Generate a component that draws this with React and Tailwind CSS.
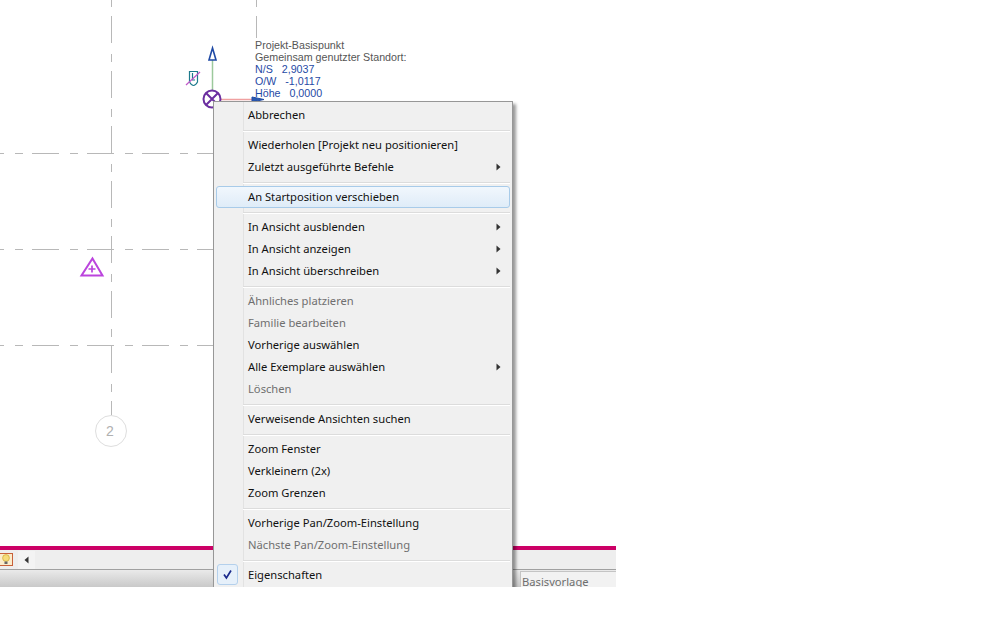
const F = "font-['Noto_Sans','Open_Sans',sans-serif]";

const groups = [
  [["Abbrechen"]],
  [["Wiederholen [Projekt neu positionieren]"], ["Zuletzt ausgeführte Befehle", "sub"]],
  [["An Startposition verschieben", "hot"]],
  [["In Ansicht ausblenden", "sub"], ["In Ansicht anzeigen", "sub"], ["In Ansicht überschreiben", "sub"]],
  [["Ähnliches platzieren", "off"], ["Familie bearbeiten", "off"], ["Vorherige auswählen"], ["Alle Exemplare auswählen", "sub"], ["Löschen", "off"]],
  [["Verweisende Ansichten suchen"]],
  [["Zoom Fenster"], ["Verkleinern (2x)"], ["Zoom Grenzen"]],
  [["Vorherige Pan/Zoom-Einstellung"], ["Nächste Pan/Zoom-Einstellung", "off"]],
  [["Eigenschaften", "check"]],
];

function Row({ label, kind }) {
  return (
    <div className={`relative h-[22px] flex items-center pl-[34px] pr-[11px] text-[11.2px] leading-none ${kind === "off" ? "text-[#6f6f6f]" : "text-[#111111]"}`}>
      {kind === "hot" && (
        <div className="absolute left-[2px] right-[2px] inset-y-0 rounded-[3px] border border-[#a8cbe9] bg-gradient-to-b from-[#f1f7fd] to-[#dfecf8]" />
      )}
      {kind === "check" && (
        <div className="absolute left-[3px] top-0 w-[21px] h-[21px] rounded-[3px] border border-[#b4d0ec] bg-[#e6f0fa] flex items-center justify-center">
          <svg width="11" height="11" viewBox="0 0 11 11"><path d="M2 5.5 L4.4 9 L9 1.5" fill="none" stroke="#1a2a8c" strokeWidth="1.7" /></svg>
        </div>
      )}
      <span className="relative flex-1 whitespace-nowrap">{label}</span>
      {kind === "sub" && (
        <svg className="relative" width="5" height="8" viewBox="0 0 5 8"><path d="M0.5 0.5 L4.5 4 L0.5 7.5 Z" fill="#333" /></svg>
      )}
    </div>
  );
}

function Separator() {
  return (
    <div className="h-[8px] ml-[29px] mr-[2px] pt-[4px]">
      <div className="h-px bg-[#dcdcdc]" />
      <div className="h-px bg-white" />
    </div>
  );
}

function ContextMenu() {
  return (
    <div className={`absolute left-[213px] top-[101px] w-[300px] border border-[#979797] bg-[#f0f0f0] pt-[2px] pb-[3px] shadow-[3px_3px_3px_rgba(0,0,0,0.4)] ${F}`}>
      <div className="absolute left-[29px] inset-y-0 w-px bg-[#e2e2e2]" />
      <div className="relative flex flex-col">
        {groups.map((g, i) => (
          <div key={i}>
            {i > 0 && <Separator />}
            {g.map(([label, kind]) => <Row key={label} label={label} kind={kind} />)}
          </div>
        ))}
      </div>
    </div>
  );
}

function Drawing() {
  const dash = "27 11 8 9";
  return (
    <svg className="absolute inset-0" width="616" height="546" viewBox="0 0 616 546">
      <g stroke="#b8b8b8" strokeWidth="1" fill="none">
        <path d="M111.5 0 V415" strokeDasharray={dash} strokeDashoffset="39" />
        <path d="M256.5 0 V38" strokeDasharray={dash} strokeDashoffset="39" />
        <path d="M0 153.5 H214" strokeDasharray={dash} strokeDashoffset="23" />
        <path d="M0 249.5 H214" strokeDasharray={dash} strokeDashoffset="23" />
        <path d="M0 345.5 H214" strokeDasharray={dash} strokeDashoffset="23" />
      </g>
      <circle cx="111" cy="431" r="15.5" fill="white" stroke="#dedede" />
      <path d="M92.5 258.5 L102.5 275.5 H81.5 Z" fill="none" stroke="#bb44dd" strokeWidth="2" />
      <path d="M92 265.5 V272.5 M88.5 269 H95.5" stroke="#bb44dd" strokeWidth="1.7" />
      <path d="M212.5 90 V60" stroke="#9cc99c" strokeWidth="1.5" />
      <path d="M212.5 48 L216 60 H209 Z" fill="white" stroke="#1f4aa5" strokeWidth="1.6" />
      <path d="M218 99.5 H252" stroke="#f0a0a0" strokeWidth="1.5" />
      <path d="M252 97 L264 99.5 L252 102 Z" fill="#2a5ab0" stroke="#1f4aa5" />
      <circle cx="212" cy="99" r="8.5" fill="white" stroke="#6b2fa0" strokeWidth="2" />
      <path d="M206 93 L218 105 M218 93 L206 105" stroke="#6b2fa0" strokeWidth="2" />
      <g fill="none" strokeWidth="1.2">
        <path d="M189.5 71.5 H197.5 V82 Q193.5 89 189.5 82 Z" stroke="#1d7a8c" />
        <path d="M192.5 73 V80 H195" stroke="#1d7a8c" />
        <path d="M186 85 L200 72" stroke="#c058c8" />
      </g>
    </svg>
  );
}

function Labels() {
  return (
    <div className="absolute left-[255px] top-[39px] font-['Liberation_Sans',sans-serif] text-[10.7px] leading-[12px] whitespace-pre text-[#555]">
      <div>Projekt-Basispunkt</div>
      <div>Gemeinsam genutzter Standort:</div>
      <div className="text-[#1f4aa5]">N/S   2,9037</div>
      <div className="text-[#1f4aa5]">O/W   -1,0117</div>
      <div className="text-[#1f4aa5]">Höhe   0,0000</div>
    </div>
  );
}

export default function App() {
  return (
    <div className="w-[1008px] h-[630px] bg-white overflow-hidden">
      <div className="relative w-[616px] h-[587px] overflow-hidden flex flex-col bg-white">
        <div className="relative flex-1">
          <Drawing />
          <Labels />
          <div className="absolute left-[106px] top-[422px] font-['Liberation_Sans',sans-serif] text-[14px] leading-[18px] text-[#b0b0b0]">2</div>
        </div>
        <div className="h-[4px] bg-[#cc0066]" />
        <div className="h-[20px] bg-[#eeeeee] border-b border-[#a0a0a0] flex items-center">
          <div className="w-[13px] h-[13px] border border-[#c8603a] bg-[#fbeccb] border-l-0 flex items-center justify-center">
            <svg width="8" height="11" viewBox="0 0 8 11"><circle cx="4" cy="4" r="3.4" fill="#f6dc7a" stroke="#c9a020" strokeWidth="0.6" /><rect x="2.5" y="7.5" width="3" height="2.5" fill="#666" /></svg>
          </div>
          <div className="ml-[5px] w-[17px] h-[18px] bg-[#f3f3f3] flex items-center justify-center">
            <svg width="5" height="8" viewBox="0 0 5 8"><path d="M4.5 0.5 L0.5 4 L4.5 7.5 Z" fill="#333" /></svg>
          </div>
        </div>
        <div className="h-[17px] shrink-0 bg-gradient-to-b from-[#eaeaea] to-[#c9c9c9] flex justify-end">
          <div className={`w-[96px] h-[17px] mt-[1px] bg-[#f2f2f2] border-l border-t border-[#c4c4c4] pl-[1px] text-[11.2px] leading-[20px] text-[#6e6e6e] ${F}`}>Basisvorlage</div>
        </div>
        <ContextMenu />
      </div>
    </div>
  );
}
